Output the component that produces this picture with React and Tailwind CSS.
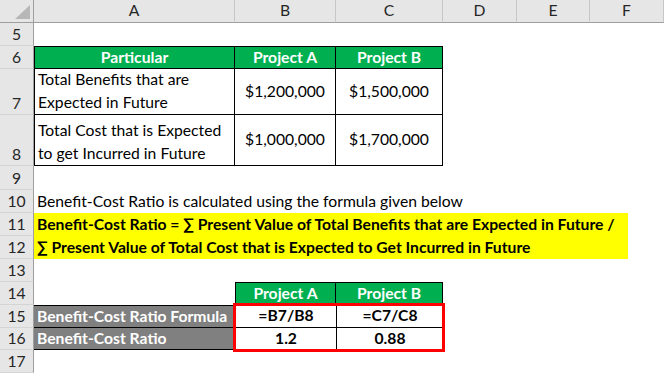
import React from 'react';

const font = { fontFamily: 'Lato, "Open Sans", sans-serif' };

const cols = ['A', 'B', 'C', 'D', 'E', 'F'];
const rowNums = [5, 6, 7, 8, 9, 10, 11, 12, 13, 14, 15, 16, 17];
const rowStart = [
  'row-start-2', 'row-start-3', 'row-start-4', 'row-start-5', 'row-start-6', 'row-start-7',
  'row-start-8', 'row-start-9', 'row-start-10', 'row-start-11', 'row-start-12', 'row-start-13', 'row-start-14',
];
const colStart = ['col-start-2', 'col-start-3', 'col-start-4', 'col-start-5', 'col-start-6', 'col-start-7'];

const App = () => {
  return (
    <div
      className="grid w-[664px] h-[373px] overflow-hidden bg-white text-[15.7px] text-black grid-cols-[34px_201px_101px_107px_74px_73px_74px] grid-rows-[23px_23px_23px_46px_51px_24px_23px_23px_23px_23px_23px_23px_22px_23px]"
      style={font}
    >
      {/* corner */}
      <div className="col-start-1 row-start-1 bg-[#e6e6e6] border-r border-b border-[#9e9e9e] flex items-end justify-end pr-[3px] pb-[3px]">
        <svg width="15" height="14" viewBox="0 0 15 14">
          <polygon points="15,0 15,14 0,14" fill="#b7b7b7" />
        </svg>
      </div>

      {/* column headers */}
      {cols.map((c, i) => (
        <div
          key={c}
          className={`${colStart[i]} row-start-1 bg-[#e6e6e6] border-r border-r-[#c6c6c6] border-b border-b-[#9e9e9e] flex items-center justify-center text-[#262626]`}
        >
          {c}
        </div>
      ))}

      {/* row headers */}
      {rowNums.map((n, i) => (
        <div
          key={n}
          className={`${rowStart[i]} col-start-1 bg-[#e6e6e6] border-r border-r-[#9e9e9e] border-b border-b-[#d4d4d4] flex items-end justify-center leading-[22px] text-[#262626]`}
        >
          {n}
        </div>
      ))}

      {/* table 1 */}
      <div className="col-start-2 row-start-3 bg-[#00b050] border border-black flex items-center justify-center font-bold text-white">
        Particular
      </div>
      <div className="col-start-3 row-start-3 bg-[#00b050] border-t border-b border-r border-black flex items-center justify-center font-bold text-white">
        Project A
      </div>
      <div className="col-start-4 row-start-3 bg-[#00b050] border-t border-b border-r border-black flex items-center justify-center font-bold text-white">
        Project B
      </div>

      <div className="col-start-2 row-start-4 border-l border-r border-b border-black flex items-end px-[3px] leading-[23px]">
        Total Benefits that are Expected in Future
      </div>
      <div className="col-start-3 row-start-4 border-r border-b border-black flex items-center justify-center">$1,200,000</div>
      <div className="col-start-4 row-start-4 border-r border-b border-black flex items-center justify-center">$1,500,000</div>

      <div className="col-start-2 row-start-5 border-l border-r border-b border-black flex items-end px-[3px] leading-[23px]">
        Total Cost that is Expected to get Incurred in Future
      </div>
      <div className="col-start-3 row-start-5 border-r border-b border-black flex items-center justify-center">$1,000,000</div>
      <div className="col-start-4 row-start-5 border-r border-b border-black flex items-center justify-center">$1,700,000</div>

      {/* formula note */}
      <div className="col-start-2 col-span-6 row-start-7 flex items-center px-[3px] whitespace-nowrap">
        Benefit-Cost Ratio is calculated using the formula given below
      </div>
      <div className="col-start-2 col-span-6 row-start-8 row-span-2 justify-self-start w-[594px] bg-[#ffff00] flex flex-col justify-center px-[3px] font-bold leading-[23px] whitespace-nowrap">
        <span>Benefit-Cost Ratio = ∑ Present Value of Total Benefits that are Expected in Future /</span>
        <span>∑ Present Value of Total Cost that is Expected to Get Incurred in Future</span>
      </div>

      {/* table 2 */}
      <div className="col-start-3 row-start-11 bg-[#00b050] border border-black flex items-center justify-center font-bold text-white">
        Project A
      </div>
      <div className="col-start-4 row-start-11 bg-[#00b050] border-t border-b border-r border-black flex items-center justify-center font-bold text-white">
        Project B
      </div>

      <div className="col-start-2 row-start-12 bg-[#808080] border-t border-b border-black flex items-center px-[3px] font-bold text-white whitespace-nowrap">
        Benefit-Cost Ratio Formula
      </div>
      <div className="col-start-3 row-start-12 border-l border-b border-black flex items-center justify-center font-bold">=B7/B8</div>
      <div className="col-start-4 row-start-12 border-l border-b border-black flex items-center justify-center font-bold">=C7/C8</div>

      <div className="col-start-2 row-start-13 bg-[#808080] border-b border-black flex items-center px-[3px] font-bold text-white whitespace-nowrap">
        Benefit-Cost Ratio
      </div>
      <div className="col-start-3 row-start-13 border-l border-black flex items-center justify-center font-bold">1.2</div>
      <div className="col-start-4 row-start-13 border-l border-black flex items-center justify-center font-bold">0.88</div>

      {/* highlight */}
      <div className="col-start-3 col-span-2 row-start-12 row-span-2 -m-[2px] border-[3px] border-[#ff0000] z-10" />
    </div>
  );
};

export default App;
